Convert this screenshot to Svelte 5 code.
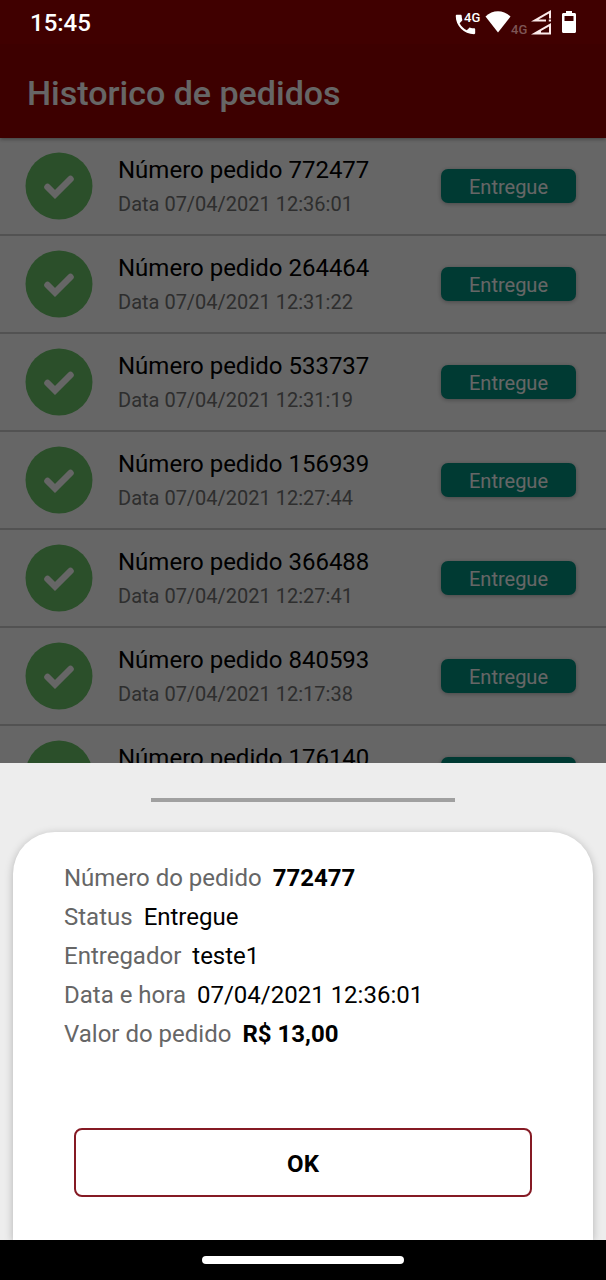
<script lang="ts">
  interface Order {
    id: string;
    date: string;
    status: string;
    courier: string;
    total: string;
  }

  const defaults = { status: "Entregue", courier: "teste1", total: "R$ 13,00" };

  const orders: Order[] = [
    { id: "772477", date: "07/04/2021 12:36:01", ...defaults },
    { id: "264464", date: "07/04/2021 12:31:22", ...defaults },
    { id: "533737", date: "07/04/2021 12:31:19", ...defaults },
    { id: "156939", date: "07/04/2021 12:27:44", ...defaults },
    { id: "366488", date: "07/04/2021 12:27:41", ...defaults },
    { id: "840593", date: "07/04/2021 12:17:38", ...defaults },
    { id: "176140", date: "07/04/2021 12:15:02", ...defaults },
  ];

  let selected = $state<Order | null>(orders[0]);

  function close() {
    selected = null;
  }

  function handleKeyDown(e: KeyboardEvent) {
    if (e.key === "Escape") close();
  }
</script>

<svelte:window onkeydown={handleKeyDown} />

<div class="phone">
  <div class="screen">
    <div class="status-bar">
      <time>15:45</time>
      <div class="status-icons">
        <svg class="call" width="26" height="28" viewBox="0 0 26 28" fill="#fff">
          <path transform="translate(-2.5 3.5) scale(1.08)" d="M6.620 10.790c1.440 2.830 3.760 5.140 6.590 6.590l2.200-2.200c.27-.27.67-.36 1.020-.24 1.120.37 2.330.57 3.570.57.55 0 1 .45 1 1V20c0 .55-.45 1-1 1-9.390 0-17-7.610-17-17 0-.55.45-1 1-1h3.500c.55 0 1 .45 1 1 0 1.250.2 2.450.57 3.570.11.35.03.74-.25 1.020z" />
          <text x="9" y="14" font-size="13" font-weight="500">4G</text>
        </svg>
        <svg class="wifi" width="26" height="28" viewBox="0 0 26 28" fill="#fff">
          <path d="M.5 8.500C7.500 1.500 18.500 1.500 25.500 8.500L13 24.500z" />
        </svg>
        <svg class="roaming" width="18" height="28" viewBox="0 0 18 28" fill="#7d5555">
          <text x="0" y="26" font-size="13" font-weight="500">4G</text>
        </svg>
        <svg class="signal" width="21" height="28" viewBox="0 0 21 28" fill="#fbeaea">
          <path d="M0 13.500 20 2v8.500h-2V5.500L7.500 11.600H15v1.900z" />
          <path d="M17.800 11.500H20v2h-2.200z" />
          <path fill-rule="evenodd" d="M0 26.500 20 15v11.500zM10 24.600h8v-6.200l-8 4.600z" />
        </svg>
        <svg class="battery" width="14" height="28" viewBox="0 0 14 28">
          <path fill="#fff" fill-rule="evenodd" d="M4 3h6v2h2.500c.9 0 1.500.6 1.500 1.500v17c0 .9-.6 1.500-1.500 1.500h-11C.6 25 0 24.400 0 23.500v-17C0 5.600.6 5 1.500 5H4zM2.500 8v5h9V8z" />
        </svg>
      </div>
    </div>

    <header>
      <h1>Historico de pedidos</h1>
    </header>

    <ul class="orders">
      {#each orders as order (order.id)}
        <li>
          <svg class="check" width="68" height="68" viewBox="0 0 68 68">
            <circle cx="34" cy="34" r="33.500" fill="#6cc66a" />
            <path d="M22.500 35 30 42.500 45.500 27" fill="none" stroke="#fff" stroke-width="6.500" stroke-linecap="round" stroke-linejoin="miter" />
          </svg>
          <div class="info">
            <div class="number">Número pedido {order.id}</div>
            <div class="date">Data {order.date}</div>
          </div>
          <button class="badge" onclick={() => (selected = order)}>{order.status}</button>
        </li>
      {/each}
    </ul>

    {#if selected}
      <div class="scrim"></div>
      <div class="sheet" role="dialog" aria-modal="true" aria-label="Detalhes do pedido">
        <div class="handle"></div>
        <div class="card">
          <dl>
            <div><dt>Número do pedido</dt><dd class="strong">{selected.id}</dd></div>
            <div><dt>Status</dt><dd>{selected.status}</dd></div>
            <div><dt>Entregador</dt><dd>{selected.courier}</dd></div>
            <div><dt>Data e hora</dt><dd>{selected.date}</dd></div>
            <div><dt>Valor do pedido</dt><dd class="strong">{selected.total}</dd></div>
          </dl>
          <button class="ok" onclick={close}>OK</button>
        </div>
      </div>
    {/if}
  </div>

  <div class="nav-bar"><div class="pill"></div></div>
</div>

<style>
  .phone {
    display: flex;
    flex-direction: column;
    height: 100vh;
    font-family: Roboto, "Liberation Sans", sans-serif;
    background: #000;
  }

  .screen {
    position: relative;
    flex: 1;
    min-height: 0;
    overflow: hidden;
    background: #fff;
  }

  .status-bar {
    position: relative;
    z-index: 2;
    display: flex;
    align-items: center;
    justify-content: space-between;
    height: 44px;
    padding: 0 30px;
    background: #400000;
    color: #fff;
  }

  time {
    padding-top: 2px;
    font-size: 24px;
    font-weight: 500;
  }

  .status-icons {
    display: flex;
    align-items: center;
  }

  .status-icons svg {
    overflow: visible;
  }

  .wifi {
    margin-left: 4px;
  }

  .signal {
    margin: 0 10px 0 2px;
  }

  header {
    display: flex;
    align-items: center;
    height: 94px;
    padding: 0 27px;
    box-sizing: border-box;
    background: #990000;
    color: #fff;
    box-shadow: 0 1px 4px rgba(0, 0, 0, 0.4);
  }

  h1 {
    margin: 0;
    padding-top: 4px;
    font-size: 34px;
    font-weight: 500;
    line-height: 40px;
  }

  .orders {
    margin: 0;
    padding: 0;
    list-style: none;
  }

  li {
    display: flex;
    align-items: center;
    height: 98px;
    padding: 0 30px 0 25px;
    box-sizing: border-box;
    border-bottom: 2px solid #cecece;
  }

  .info {
    flex: 1;
    margin-left: 25px;
    padding-top: 2px;
  }

  .number {
    font-size: 24px;
    line-height: 34px;
    color: #000;
  }

  .date {
    font-size: 20px;
    line-height: 34px;
    color: #737373;
  }

  .badge {
    width: 135px;
    height: 34px;
    padding: 2px 0 0;
    border: none;
    border-radius: 7px;
    background: #009180;
    color: #fff;
    font-family: inherit;
    font-size: 20px;
    box-shadow: 0 1px 4px rgba(0, 0, 0, 0.3);
  }

  .scrim {
    position: absolute;
    inset: 0;
    background: rgba(0, 0, 0, 0.6);
  }

  .sheet {
    position: absolute;
    z-index: 3;
    left: 0;
    right: 0;
    bottom: 0;
    padding: 35px 13px 0;
    background: #ededed;
  }

  .handle {
    width: 304px;
    height: 4px;
    margin: 0 auto 30px;
    background: #a0a0a0;
  }

  .card {
    padding: 27px 51px 43px;
    border-radius: 42px 42px 0 0;
    background: #fff;
    box-shadow: 0 2px 8px rgba(0, 0, 0, 0.25);
  }

  dl {
    margin: 0;
    font-size: 24px;
    line-height: 39px;
  }

  dl div {
    display: flex;
    gap: 11px;
  }

  dt {
    color: #666;
  }

  dd {
    margin: 0;
    color: #000;
  }

  .strong {
    font-weight: 700;
  }

  .ok {
    display: block;
    width: calc(100% - 20px);
    height: 69px;
    margin: 74px 10px 0;
    padding: 2px 0 0;
    border: 2px solid #851a24;
    border-radius: 8px;
    background: #fff;
    color: #000;
    font-family: inherit;
    font-size: 24px;
    font-weight: 700;
  }

  .nav-bar {
    display: flex;
    align-items: center;
    justify-content: center;
    height: 40px;
    background: #000;
  }

  .pill {
    width: 202px;
    height: 8px;
    border-radius: 4px;
    background: #fff;
  }
</style>
